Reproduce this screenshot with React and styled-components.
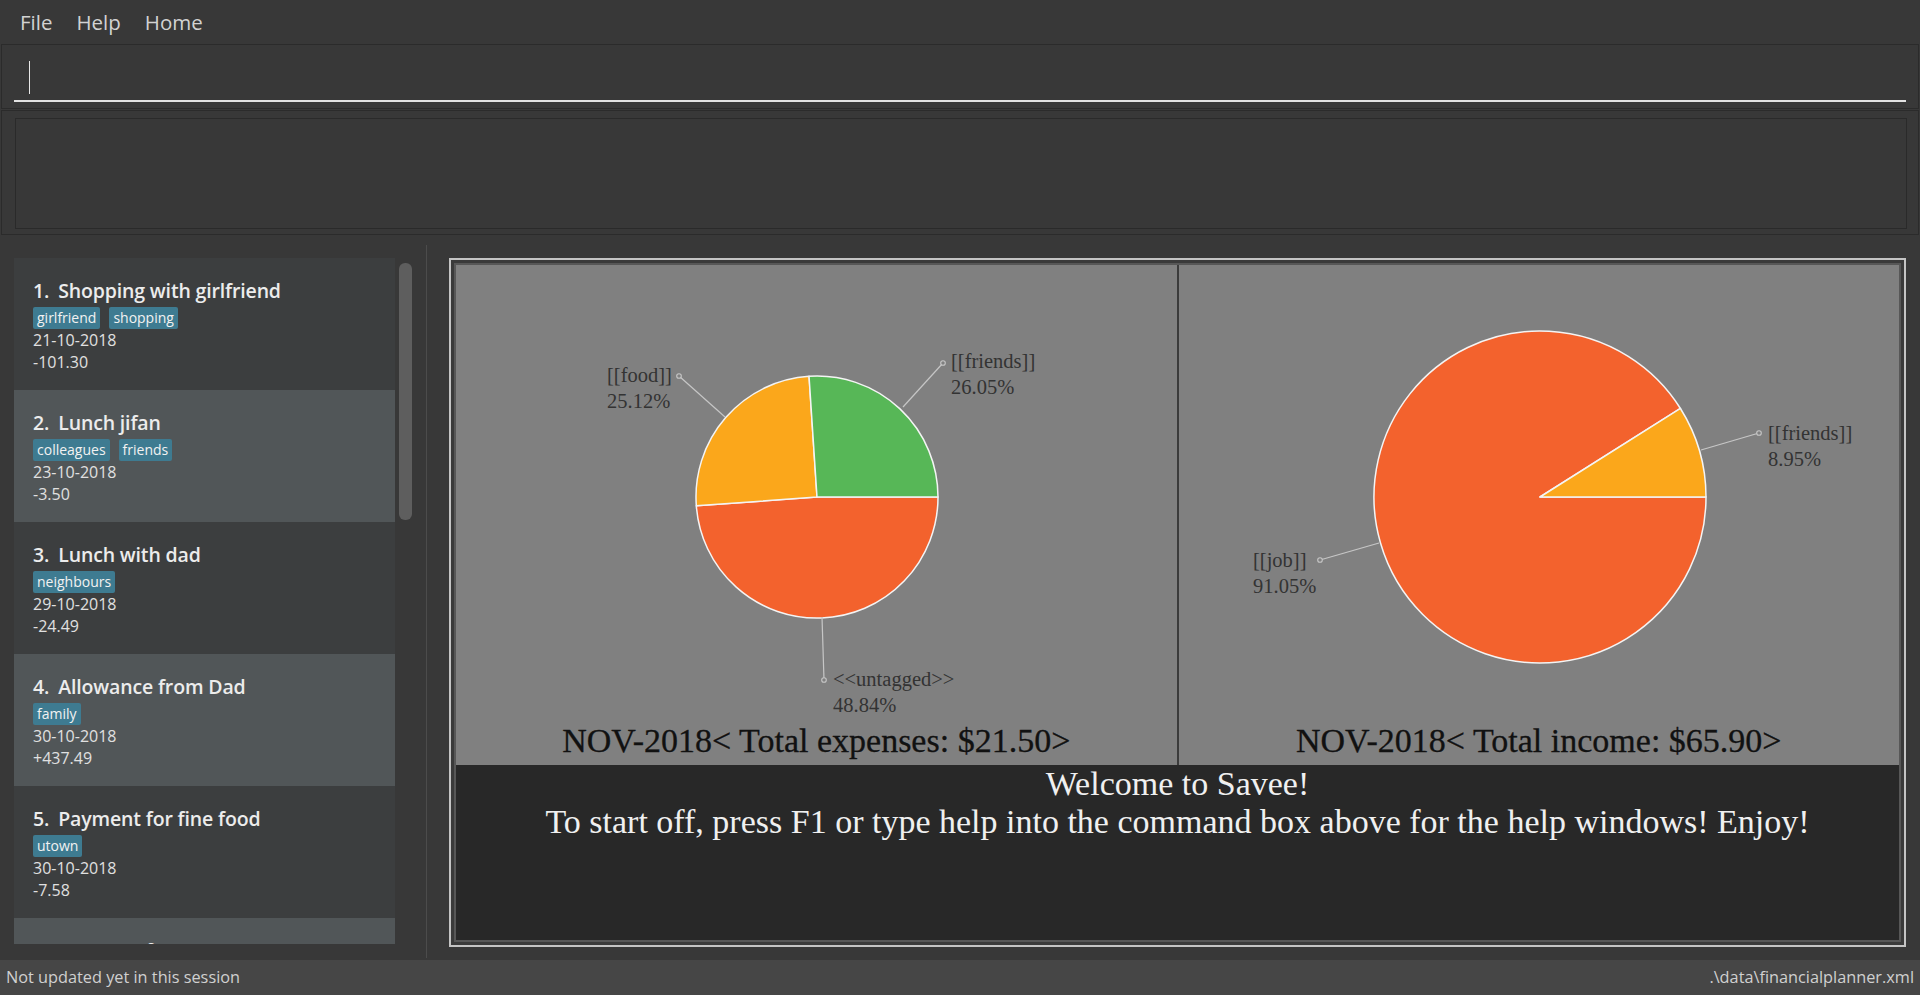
import React from "react";
import styled, { createGlobalStyle } from "styled-components";

const GlobalStyle = createGlobalStyle`
  html, body { margin: 0; padding: 0; background: #383838; overflow: hidden; }
  #root { height: 995px; }
  * { box-sizing: border-box; }
`;

const Shell = styled.div`
  height: 995px;
  display: flex;
  flex-direction: column;
  background: #383838;
  font-family: "Open Sans", "Noto Sans", sans-serif;
`;

const MenuBar = styled.div`
  height: 44px;
  flex-shrink: 0;
  display: flex;
  align-items: center;
  padding-left: 8px;
`;

const MenuItem = styled.div`
  font-size: 20.5px;
  line-height: 44px;
  color: #d2d2d2;
  padding: 0 12px;
`;

const CommandPanel = styled.div`
  height: 65px;
  flex-shrink: 0;
  margin: 0 1px 1px;
  border: 1px solid #2b2b2b;
  padding: 7px 12px 0 12px;
`;

const CommandField = styled.div`
  height: 50px;
  border-bottom: 2px solid #e2e2e2;
  padding: 9px 0 0 15px;
  display: flex;
  align-items: flex-start;
`;

const Caret = styled.div`
  width: 1px;
  height: 33px;
  background: #e8e8e8;
`;

const ResultPanel = styled.div`
  height: 125px;
  flex-shrink: 0;
  margin: 0 1px;
  border: 1px solid #2b2b2b;
  padding: 7px 11px 5px 13px;
`;

const ResultBox = styled.div`
  height: 111px;
  border: 1px solid #2a2a2a;
`;

const Main = styled.div`
  flex: 1;
  display: flex;
  min-height: 0;
`;

const LeftColumn = styled.div`
  width: 426px;
  flex-shrink: 0;
  padding: 23px 0 0 14px;
`;

const ListView = styled.div`
  width: 398px;
  height: 686px;
  display: flex;
  gap: 4px;
  overflow: hidden;
`;

const Cards = styled.div`
  width: 381px;
  display: flex;
  flex-direction: column;
  flex-shrink: 0;
`;

const Card = styled.div`
  height: 132px;
  flex-shrink: 0;
  padding: 19px 0 0 19px;
  background: ${(p) => (p.$odd ? "#515658" : "#3c3e3f")};
`;

const CardTitle = styled.div`
  font-size: 19.5px;
  letter-spacing: -0.15px;
  font-weight: 600;
  line-height: 27px;
  color: #ececec;
  white-space: nowrap;
`;

const IdText = styled.span`
  margin-right: 9px;
`;

const TagRow = styled.div`
  display: flex;
  gap: 9px;
  margin-top: 3px;
  height: 22px;
`;

const Tag = styled.span`
  background: #3e7b91;
  color: #f2f2f2;
  font-size: 14px;
  line-height: 22px;
  padding: 0 4px;
  border-radius: 2px;
`;

const CardLine = styled.div`
  font-size: 16px;
  line-height: 22px;
  color: #e0e0e0;
`;

const ScrollTrack = styled.div`
  width: 13px;
  flex-shrink: 0;
  padding-top: 5px;
`;

const ScrollThumb = styled.div`
  width: 13px;
  height: 257px;
  border-radius: 6px;
  background: #5e5e5e;
`;

const Splitter = styled.div`
  width: 1px;
  flex-shrink: 0;
  margin: 10px 0 2px;
  background: #4c4c4c;
`;

const RightColumn = styled.div`
  flex: 1;
  min-width: 0;
  padding: 23px 14px 13px 22px;
  display: flex;
`;

const Frame = styled.div`
  flex: 1;
  border: 2px solid #c4c4c4;
  padding: 3px;
  background: #3a3a3a;
  display: flex;
`;

const FrameInner = styled.div`
  flex: 1;
  border: 2px solid #575757;
  display: flex;
  flex-direction: column;
`;

const ChartRow = styled.div`
  height: 500px;
  flex-shrink: 0;
  display: flex;
  background: #808080;
`;

const ChartPane = styled.div`
  flex: 1;
  display: flex;
  flex-direction: column;
  min-width: 0;
`;

const ChartDivider = styled.div`
  width: 2px;
  flex-shrink: 0;
  background: #3b3b3b;
`;

const PlotSvg = styled.svg`
  display: block;
  width: 100%;
  height: 454px;
  flex-shrink: 0;
`;

const ChartTitle = styled.div`
  height: 46px;
  padding-top: 2px;
  text-align: center;
  font-family: "Liberation Serif", "DejaVu Serif", serif;
  font-size: 34px;
  line-height: 40px;
  color: #111111;
  white-space: nowrap;
  -webkit-text-stroke: 0.3px #111111;
`;

const Welcome = styled.div`
  flex: 1;
  background: #282828;
  text-align: center;
  font-family: "Liberation Serif", "DejaVu Serif", serif;
  font-size: 34px;
  line-height: 38px;
  color: #f0f0f0;
  white-space: nowrap;
`;

const StatusBar = styled.div`
  height: 35px;
  flex-shrink: 0;
  background: #464646;
  display: flex;
  justify-content: space-between;
  align-items: center;
  padding: 0 6px;
  font-size: 16.3px;
  line-height: 35px;
  color: #d0d0d0;
`;

const entries = [
  { name: "Shopping with girlfriend", tags: ["girlfriend", "shopping"], date: "21-10-2018", amount: "-101.30" },
  { name: "Lunch jifan", tags: ["colleagues", "friends"], date: "23-10-2018", amount: "-3.50" },
  { name: "Lunch with dad", tags: ["neighbours"], date: "29-10-2018", amount: "-24.49" },
  { name: "Allowance from Dad", tags: ["family"], date: "30-10-2018", amount: "+437.49" },
  { name: "Payment for fine food", tags: ["utown"], date: "30-10-2018", amount: "-7.58" },
  { name: "Payment for rent", tags: ["house"], date: "31-10-2018", amount: "-300.00" },
];

const COLORS = ["#f3622d", "#fba71b", "#57b757"];

function slicePath(cx, cy, r, a0, a1) {
  const rad = (d) => (d * Math.PI) / 180;
  const x0 = cx + r * Math.cos(rad(a0));
  const y0 = cy + r * Math.sin(rad(a0));
  const x1 = cx + r * Math.cos(rad(a1));
  const y1 = cy + r * Math.sin(rad(a1));
  const large = a1 - a0 > 180 ? 1 : 0;
  return `M${cx},${cy} L${x0.toFixed(2)},${y0.toFixed(2)} A${r},${r} 0 ${large} 1 ${x1.toFixed(2)},${y1.toFixed(2)} Z`;
}

function PieChart({ cx, cy, r, values, labels }) {
  let acc = 0;
  const total = values.reduce((a, b) => a + b, 0);
  const slices = values.map((v, i) => {
    const a0 = (acc / total) * 360;
    acc += v;
    const a1 = (acc / total) * 360;
    return <path key={i} d={slicePath(cx, cy, r, a0, a1)} fill={COLORS[i]} stroke="#f4f4f4" strokeWidth="1.5" strokeLinejoin="round" />;
  });
  return (
    <PlotSvg viewBox="0 0 720 454" preserveAspectRatio="xMinYMin meet">
      {slices}
      {labels.map((l, i) => (
        <g key={i}>
          <line x1={l.from[0]} y1={l.from[1]} x2={l.to[0]} y2={l.to[1]} stroke="#c6c6c6" strokeWidth="1.2" />
          <circle cx={l.to[0]} cy={l.to[1]} r="2.3" fill="#808080" stroke="#c6c6c6" strokeWidth="1.1" />
          <text x={l.x} y={l.y} fontFamily="'Liberation Serif', 'DejaVu Serif', serif" fontSize="20.5" fill="#333333">
            {l.name}
          </text>
          <text x={l.x} y={l.y + 26} fontFamily="'Liberation Serif', 'DejaVu Serif', serif" fontSize="20.5" fill="#333333">
            {l.pct}
          </text>
        </g>
      ))}
    </PlotSvg>
  );
}

export default function App() {
  return (
    <>
      <GlobalStyle />
      <Shell>
        <MenuBar>
          <MenuItem>File</MenuItem>
          <MenuItem>Help</MenuItem>
          <MenuItem>Home</MenuItem>
        </MenuBar>
        <CommandPanel>
          <CommandField>
            <Caret />
          </CommandField>
        </CommandPanel>
        <ResultPanel>
          <ResultBox />
        </ResultPanel>
        <Main>
          <LeftColumn>
            <ListView>
              <Cards>
                {entries.map((e, i) => (
                  <Card key={i} $odd={i % 2 === 1}>
                    <CardTitle>
                      <IdText>{i + 1}.</IdText>
                      {e.name}
                    </CardTitle>
                    <TagRow>
                      {e.tags.map((t) => (
                        <Tag key={t}>{t}</Tag>
                      ))}
                    </TagRow>
                    <CardLine>{e.date}</CardLine>
                    <CardLine>{e.amount}</CardLine>
                  </Card>
                ))}
              </Cards>
              <ScrollTrack>
                <ScrollThumb />
              </ScrollTrack>
            </ListView>
          </LeftColumn>
          <Splitter />
          <RightColumn>
            <Frame>
              <FrameInner>
                <ChartRow>
                  <ChartPane>
                    <PieChart
                      cx={361}
                      cy={232}
                      r={121}
                      values={[48.84, 25.12, 26.05]}
                      labels={[
                        { name: "<<untagged>>", pct: "48.84%", from: [366, 352], to: [368, 415], x: 377, y: 421 },
                        { name: "[[food]]", pct: "25.12%", from: [269, 152], to: [223, 111], x: 151, y: 117 },
                        { name: "[[friends]]", pct: "26.05%", from: [447, 142], to: [487, 98], x: 495, y: 103 },
                      ]}
                    />
                    <ChartTitle>NOV-2018&lt; Total expenses: $21.50&gt;</ChartTitle>
                  </ChartPane>
                  <ChartDivider />
                  <ChartPane>
                    <PieChart
                      cx={361}
                      cy={232}
                      r={166}
                      values={[91.05, 8.95]}
                      labels={[
                        { name: "[[job]]", pct: "91.05%", from: [200, 278], to: [141, 295], x: 74, y: 302 },
                        { name: "[[friends]]", pct: "8.95%", from: [522, 185], to: [580, 168], x: 589, y: 175 },
                      ]}
                    />
                    <ChartTitle>NOV-2018&lt; Total income: $65.90&gt;</ChartTitle>
                  </ChartPane>
                </ChartRow>
                <Welcome>
                  <div>Welcome to Savee!</div>
                  <div>To start off, press F1 or type help into the command box above for the help windows! Enjoy!</div>
                </Welcome>
              </FrameInner>
            </Frame>
          </RightColumn>
        </Main>
        <StatusBar>
          <span>Not updated yet in this session</span>
          <span>.\data\financialplanner.xml</span>
        </StatusBar>
      </Shell>
    </>
  );
}
